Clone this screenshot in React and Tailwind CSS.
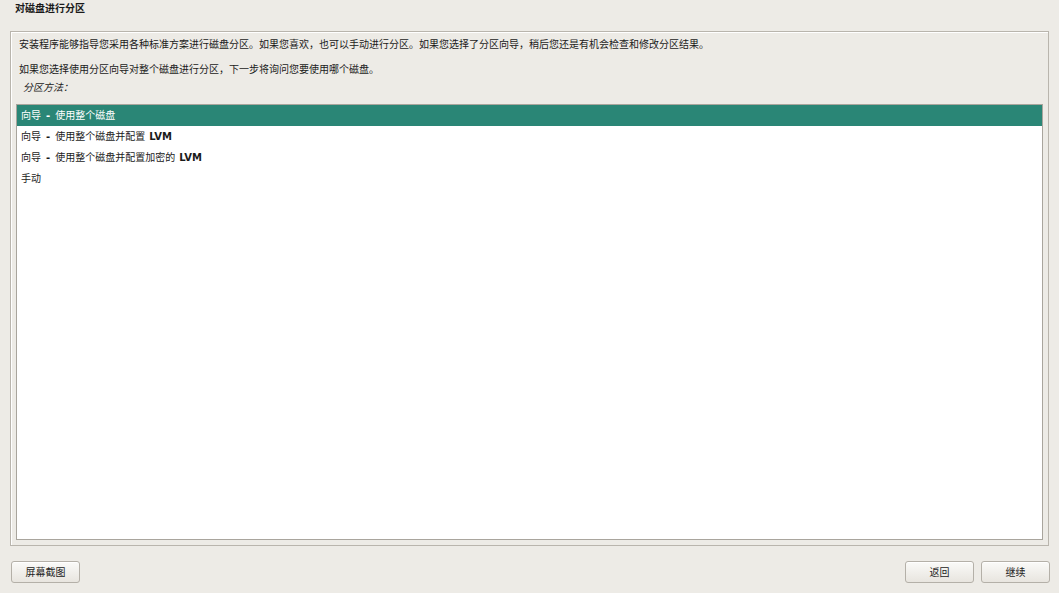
import React from "react";

const options = [
  { pre: "向导", dash: true, text: "使用整个磁盘", bold: "" },
  { pre: "向导", dash: true, text: "使用整个磁盘并配置", bold: "LVM" },
  { pre: "向导", dash: true, text: "使用整个磁盘并配置加密的", bold: "LVM" },
  { pre: "手动", dash: false, text: "", bold: "" },
];

const Button = ({ children, className = "" }) => (
  <button
    className={
      "h-[22px] w-[69px] rounded-[3px] border border-[#b4b0a8] bg-gradient-to-b from-[#fafaf8] to-[#e8e5df] text-[10px] text-[#222] shadow-[inset_0_1px_0_#ffffff] " +
      className
    }
  >
    {children}
  </button>
);

export default function App() {
  return (
    <div
      className="flex h-[593px] w-[1059px] flex-col bg-[#edebe6] text-[#1a1a1a]"
      style={{ fontFamily: '"DejaVu Sans", "Noto Sans CJK SC", sans-serif' }}
    >
      {/* Title */}
      <div className="flex h-[31px] items-start pl-[15px] pt-[2px] text-[10px] font-bold leading-[14px]">
        对磁盘进行分区
      </div>

      {/* Main panel */}
      <div className="mx-[10px] flex h-[515px] flex-col border border-[#b9b5ad] px-[5px] pb-[5px] shadow-[inset_1px_1px_0_#ffffff]">
        <p className="pl-[3px] pt-[6px] text-[10px] leading-[14px]">
          安装程序能够指导您采用各种标准方案进行磁盘分区。如果您喜欢，也可以手动进行分区。如果您选择了分区向导，稍后您还是有机会检查和修改分区结果。
        </p>
        <p className="pl-[3px] pt-[11px] text-[10px] leading-[14px]">
          如果您选择使用分区向导对整个磁盘进行分区，下一步将询问您要使用哪个磁盘。
        </p>
        <p className="pl-[7px] pt-[4px] text-[10px] italic leading-[14px]">分区方法：</p>

        <div className="mt-[9px] flex-1 border border-[#a9a59d] bg-white">
          {options.map((o, i) => (
            <div
              key={i}
              className={
                "flex h-[21px] items-center pl-[4px] text-[10px] " +
                (i === 0 ? "bg-[#2a8676] text-white" : "text-[#1a1a1a]")
              }
            >
              <span>{o.pre}</span>
              {o.dash && <span className="mx-[5px] font-bold">-</span>}
              <span>{o.text}</span>
              {o.bold && <span className="ml-[4px] font-bold">{o.bold}</span>}
            </div>
          ))}
        </div>
      </div>

      {/* Footer */}
      <div className="flex items-center justify-between pl-[11px] pr-[9px] pt-[15px]">
        <Button>屏幕截图</Button>
        <div className="flex gap-[7px]">
          <Button>返回</Button>
          <Button>继续</Button>
        </div>
      </div>
    </div>
  );
}
